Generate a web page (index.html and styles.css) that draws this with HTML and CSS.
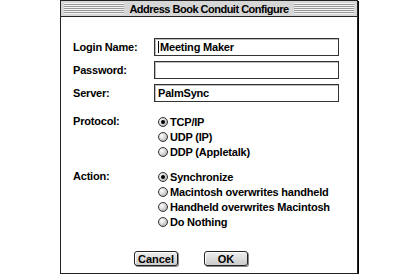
FILE: index.html
```html
<!DOCTYPE html>
<html lang="en">
<head>
    <meta charset="UTF-8">
    <title>Address Book Conduit Configure</title>
    <link rel="stylesheet" href="styles.css">
</head>
<body>
    <div class="window">
        <div class="titlebar">
            <div class="stripes"></div>
            <div class="title">Address Book Conduit Configure</div>
            <div class="stripes"></div>
        </div>
        <div class="content">
            <div class="fields">
                <label>Login Name:</label>
                <div class="field"><span class="caret"></span>Meeting Maker</div>
                <label>Password:</label>
                <div class="field"></div>
                <label>Server:</label>
                <div class="field">PalmSync</div>
            </div>

            <div class="group protocol">
                <label>Protocol:</label>
                <div class="options">
                    <div class="option"><span class="radio on"></span>TCP/IP</div>
                    <div class="option"><span class="radio"></span>UDP (IP)</div>
                    <div class="option"><span class="radio"></span>DDP (Appletalk)</div>
                </div>
            </div>

            <div class="group action">
                <label>Action:</label>
                <div class="options">
                    <div class="option"><span class="radio on"></span>Synchronize</div>
                    <div class="option"><span class="radio"></span>Macintosh overwrites handheld</div>
                    <div class="option"><span class="radio"></span>Handheld overwrites Macintosh</div>
                    <div class="option"><span class="radio"></span>Do Nothing</div>
                </div>
            </div>

            <div class="buttons">
                <button>Cancel</button>
                <button>OK</button>
            </div>
        </div>
    </div>
</body>
</html>
```

FILE: styles.css
```css
body {
    margin: 0;
    background: #fff;
    font-family: "Liberation Sans", Arial, sans-serif;
    font-weight: bold;
    font-size: 11px;
    letter-spacing: -0.2px;
    color: #000;
}
.window {
    margin-left: 60px;
    width: 296px;
    height: 272px;
    border: 1px solid #222;
    box-shadow: 1px 1px 0 #000;
    background: #fff;
}
.titlebar {
    height: 15px;
    background: #d6d6d6;
    border-bottom: 1px solid #222;
    display: flex;
    align-items: center;
    gap: 5px;
    padding: 0 3px;
}
.stripes {
    flex: 1;
    height: 11px;
    background: repeating-linear-gradient(to bottom, #f4f4f4 0, #f4f4f4 1px, #999 1px, #999 2px);
}
.title {
    font-size: 11px;
    letter-spacing: -0.5px;
    white-space: nowrap;
}
.content {
    padding: 21px 0 0 12px;
}
.fields {
    display: grid;
    grid-template-columns: 81px 185px;
    row-gap: 5px;
    align-items: center;
}
.field {
    height: 16px;
    border: 1px solid #333;
    box-shadow: inset 1px 1px 0 #bbb;
    display: flex;
    align-items: center;
    padding-left: 3px;
}
.caret {
    width: 1px;
    height: 12px;
    background: #000;
    margin-right: 1px;
}
.group {
    display: grid;
    grid-template-columns: 85px auto;
}
.protocol {
    margin-top: 12px;
}
.action {
    margin-top: 10px;
}
.group label {
    line-height: 15px;
}
.option {
    height: 15px;
    display: flex;
    align-items: center;
    gap: 2px;
}
.radio {
    width: 8px;
    height: 8px;
    border: 1px solid #333;
    border-radius: 50%;
    background: radial-gradient(circle at 35% 35%, #fff 0, #ddd 40%, #999 100%);
    display: flex;
    align-items: center;
    justify-content: center;
}
.radio.on::after {
    content: "";
    width: 4px;
    height: 4px;
    border-radius: 50%;
    background: #000;
}
.buttons {
    display: flex;
    gap: 26px;
    margin: 22px 0 0 61px;
}
.buttons button {
    width: 44px;
    height: 15px;
    padding: 0;
    font: inherit;
    border: 1px solid #222;
    border-radius: 3px;
    background: linear-gradient(#eee, #ccc);
    box-shadow: inset 1px 1px 0 #fff, 1px 1px 0 #888;
}
```
